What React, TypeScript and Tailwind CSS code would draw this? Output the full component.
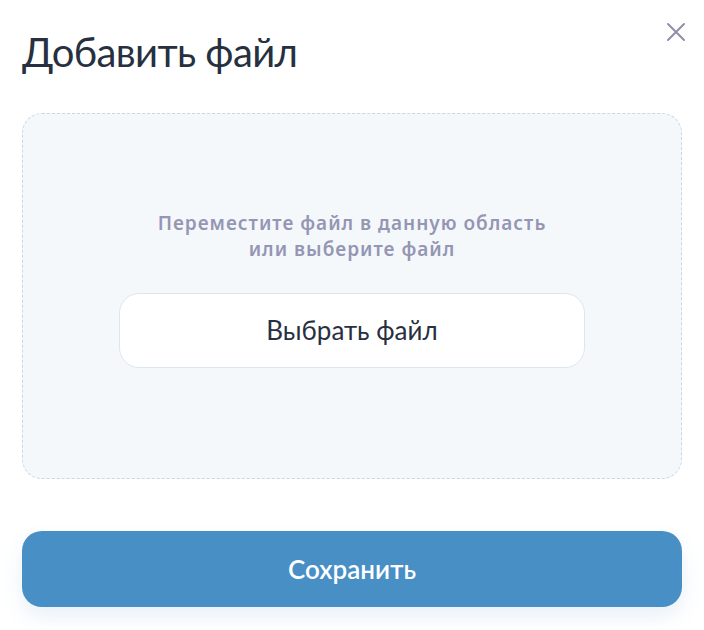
export default function App() {
  return (
    <div className="w-[704px] h-[630px] bg-white relative" style={{ fontFamily: 'Lato, "Noto Sans", sans-serif' }}>
      <button className="absolute left-[666px] top-[22px] w-[20px] h-[20px] text-[#8e8fa8]">
        <svg viewBox="0 0 20 20" width="20" height="20" fill="none" stroke="currentColor" strokeWidth="2" strokeLinecap="round">
          <path d="M2 2L18 18M18 2L2 18" />
        </svg>
      </button>
      <div className="px-[22px] pt-[28px]">
        <h1 className="text-[40px] leading-[48px] text-[#27303f] font-normal tracking-[-0.6px]">Добавить файл</h1>
        <div className="mt-[37px] h-[366px] pb-[14px] rounded-[20px] border border-dashed border-[#c6d9ea] bg-[#f5f8fb] flex flex-col items-center justify-center">
          <p
            className="text-[19px] leading-[26px] font-semibold text-[#9496b3] text-center tracking-[1px]"
            style={{ fontFamily: '"Noto Sans", sans-serif' }}
          >
            Переместите файл в данную область
            <br />
            или выберите файл
          </p>
          <button className="mt-[31px] w-[466px] h-[75px] rounded-[20px] bg-white border border-[#dde6ee] text-[26px] text-[#27303f]">
            Выбрать файл
          </button>
        </div>
        <button className="mt-[52px] w-full h-[76px] rounded-[20px] bg-[#478fc5] text-white text-[26px] font-semibold shadow-[0_10px_20px_rgba(71,143,197,0.12)]">
          Сохранить
        </button>
      </div>
    </div>
  );
}
